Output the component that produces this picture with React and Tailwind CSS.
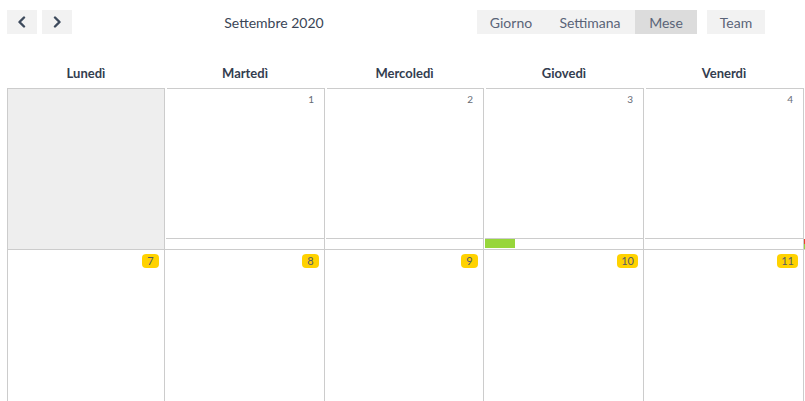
import React from "react";

const days = ["Lunedì", "Martedì", "Mercoledì", "Giovedì", "Venerdì"];
const cols = "grid-cols-[158px_160px_159px_160px_160px_1px]";

function Chevron({ dir }) {
  return (
    <svg width="10" height="12" viewBox="0 0 10 12" className="text-[#3d4a5c]">
      <path
        d={dir === "left" ? "M7 1.5 L2.5 6 L7 10.5" : "M3 1.5 L7.5 6 L3 10.5"}
        fill="none"
        stroke="currentColor"
        strokeWidth="2.4"
        strokeLinecap="round"
        strokeLinejoin="round"
      />
    </svg>
  );
}

function FirstRowCell({ num, outside, bar }) {
  if (outside) {
    return <div className="h-[161px] bg-[#eeeeee] border-t border-x border-[#cccccc]" />;
  }
  return (
    <div className="h-[161px] flex flex-col border-r border-[#cccccc]">
      <div className="ml-[2px] border-t border-[#cccccc]" />
      <div className="h-[150px] flex justify-end pr-[10px] pt-[4px]">
        <span className="text-[10px] leading-[12px] text-[#666b75]">{num}</span>
      </div>
      <div className="ml-[1px] border-t border-[#cccccc]" />
      <div className="h-[10px] flex pl-[1px]">
        {bar && <div className="w-[30px] h-[9px] bg-[#97d63b]" />}
      </div>
    </div>
  );
}

function SecondRowCell({ num, first }) {
  return (
    <div
      className={`h-[160px] flex justify-end pt-[4px] pr-[5px] border-t border-r border-[#cccccc] ${
        first ? "border-l" : ""
      }`}
    >
      <span className="h-[14px] min-w-[17px] px-[4px] rounded-[4px] bg-[#ffd200] text-[11px] leading-[14px] text-center text-[#555b66]">
        {num}
      </span>
    </div>
  );
}

export default function App() {
  return (
    <div className="w-[805px] h-[401px] overflow-hidden bg-white font-['Lato','Open_Sans',sans-serif]">
      {/* Toolbar */}
      <div className="flex items-center h-[24px] mt-[10px] pl-[7px]">
        <div className="flex gap-[5px]">
          <button className="w-[30px] h-[24px] bg-[#f2f2f2] flex items-center justify-center">
            <Chevron dir="left" />
          </button>
          <button className="w-[30px] h-[24px] bg-[#f2f2f2] flex items-center justify-center">
            <Chevron dir="right" />
          </button>
        </div>
        <div className="ml-[152px] w-[100px] text-center text-[14px] text-[#3a4556]">
          Settembre 2020
        </div>
        <div className="ml-[153px] flex h-[24px] text-[14px] text-[#5a6478]">
          <div className="w-[68px] bg-[#f2f2f2] flex items-center justify-center">Giorno</div>
          <div className="w-[90px] bg-[#f2f2f2] flex items-center justify-center">Settimana</div>
          <div className="w-[62px] bg-[#dcdcdc] flex items-center justify-center">Mese</div>
          <div className="ml-[10px] w-[58px] bg-[#f2f2f2] flex items-center justify-center">Team</div>
        </div>
      </div>

      {/* Calendar */}
      <div className="ml-[7px] mt-[29px]">
        <div className={`grid ${cols} h-[20px] mb-[5px]`}>
          {days.map((d) => (
            <div key={d} className="text-center text-[13px] font-bold text-[#333d4f] leading-[20px]">
              {d}
            </div>
          ))}
        </div>
        <div className={`grid ${cols}`}>
          <FirstRowCell outside />
          <FirstRowCell num="1" />
          <FirstRowCell num="2" />
          <FirstRowCell num="3" bar />
          <FirstRowCell num="4" />
          <div className="h-[161px] flex flex-col justify-end">
            <div className="h-[5px] bg-[#e8412c]" />
            <div className="h-[5px] bg-[#97d63b]" />
          </div>
        </div>
        <div className={`grid ${cols}`}>
          {[7, 8, 9, 10, 11].map((n, i) => (
            <SecondRowCell key={n} num={n} first={i === 0} />
          ))}
          <div className="h-[160px] border-t border-[#cccccc]" />
        </div>
      </div>
    </div>
  );
}
